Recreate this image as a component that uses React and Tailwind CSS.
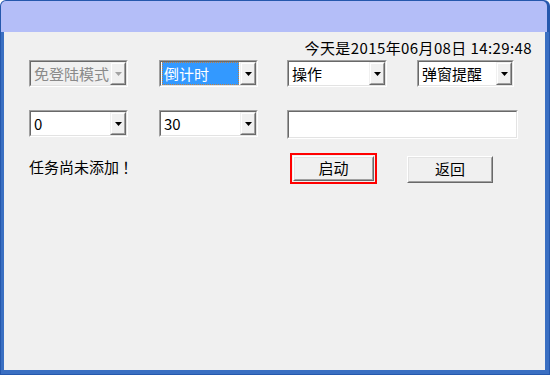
import React from "react";

const font = { fontFamily: '"Noto Sans CJK SC", "Open Sans", sans-serif' };

function Arrow({ disabled }) {
  return (
    <svg width="7" height="4" viewBox="0 0 7 4" className="block">
      <polygon points="0,0 7,0 3.5,4" fill={disabled ? "#a3a3a3" : "#000000"} />
    </svg>
  );
}

function DropBtn({ disabled }) {
  return (
    <div className="w-[16px] h-full border border-t-[#f0f0f0] border-l-[#f0f0f0] border-r-[#696969] border-b-[#696969] flex">
      <div className="flex-1 border border-t-[#ffffff] border-l-[#ffffff] border-r-[#a0a0a0] border-b-[#a0a0a0] bg-[#f0f0f0] flex items-center justify-center">
        <Arrow disabled={disabled} />
      </div>
    </div>
  );
}

function Sunken({ className, inner, children }) {
  return (
    <div className={"flex border border-t-[#a0a0a0] border-l-[#a0a0a0] border-r-[#ffffff] border-b-[#ffffff] " + className}>
      <div className={"flex-1 flex border border-t-[#696969] border-l-[#696969] border-r-[#e3e3e3] border-b-[#e3e3e3] " + inner}>
        {children}
      </div>
    </div>
  );
}

function Combo({ text, w, disabled, selected }) {
  return (
    <Sunken className={w + " h-[27px]"} inner={disabled ? "bg-[#f0f0f0]" : "bg-white"}>
      <div className="flex-1 flex items-center pl-px min-w-0">
        {selected ? (
          <div className="flex-1 h-[23px] mr-px bg-[#3399ff] border border-dotted border-[#c08040] text-white text-[15px] leading-[21px] pl-px">
            {text}
          </div>
        ) : (
          <span className={"text-[15px] leading-[21px] pl-[2px] " + (disabled ? "text-[#8a8a8a]" : "text-black")}>{text}</span>
        )}
      </div>
      <DropBtn disabled={disabled} />
    </Sunken>
  );
}

function Button({ text, red }) {
  const inner = (
    <div className="h-full border border-t-[#ffffff] border-l-[#ffffff] border-r-[#696969] border-b-[#696969] flex">
      <div className="flex-1 border border-t-[#e3e3e3] border-l-[#e3e3e3] border-r-[#a0a0a0] border-b-[#a0a0a0] bg-[#f0f0f0] flex items-center justify-center text-[15px] text-black">
        {text}
      </div>
    </div>
  );
  if (red) {
    return <div className="w-[87px] h-[31px] border-2 border-[#ff0000] p-px">{inner}</div>;
  }
  return <div className="w-[86px] h-[27px] mt-[3px]">{inner}</div>;
}

export default function App() {
  return (
    <div className="w-[550px] h-[375px] bg-[#2558ad] rounded-t-[6px] p-px flex flex-col" style={font}>
      <div className="h-[31px] bg-[#b4bef8] rounded-t-[5px] mr-[2px]" />
      <div className="flex-1 bg-[#3a6fc2] pl-[3px] pr-[4px] pb-[4px] flex">
        <div className="flex-1 bg-[#f0f0f0] flex flex-col">
          <div className="flex justify-end pr-[13px] pt-[6px] h-[28px] text-[15px] leading-[20px] tracking-[0.4px] text-black">
            今天是2015年06月08日 14:29:48
          </div>
          <div className="flex pl-[25px]">
            <Combo text="免登陆模式" w="w-[99px]" disabled />
            <div className="w-[31px]" />
            <Combo text="倒计时" w="w-[99px]" selected />
            <div className="w-[29px]" />
            <Combo text="操作" w="w-[100px]" />
            <div className="w-[30px]" />
            <Combo text="弹窗提醒" w="w-[97px]" />
          </div>
          <div className="flex pl-[25px] mt-[23px]">
            <Combo text="0" w="w-[99px]" />
            <div className="w-[31px]" />
            <Combo text="30" w="w-[99px]" />
            <div className="w-[29px]" />
            <Sunken className="w-[231px] h-[29px]" inner="bg-white" />
          </div>
          <div className="flex pl-[25px] mt-[14px]">
            <div className="w-[261px] text-[15px] leading-[20px] pt-[4px] text-black">任务尚未添加 ！</div>
            <Button text="启动" red />
            <div className="w-[30px]" />
            <Button text="返回" />
          </div>
        </div>
      </div>
    </div>
  );
}
